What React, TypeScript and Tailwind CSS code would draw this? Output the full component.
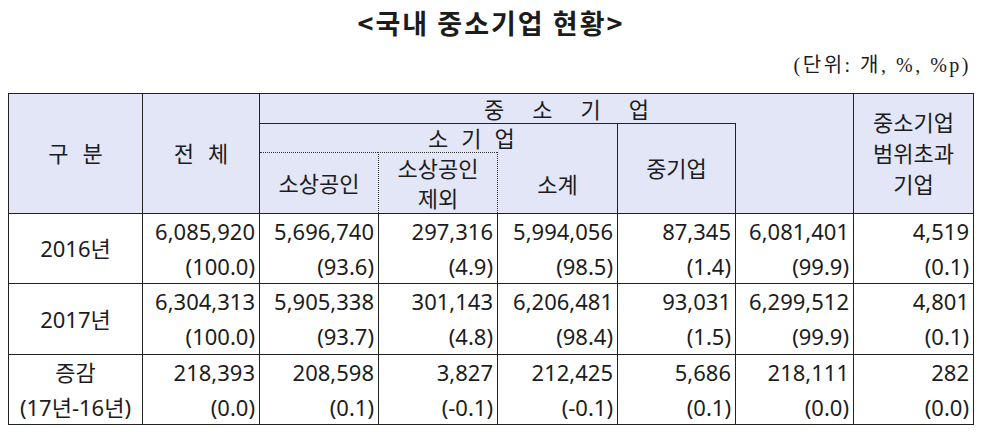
import React from 'react';

const rows = [
  {
    label: ['2016년'],
    h: 'h-[70px]',
    cells: [
      ['6,085,920', '(100.0)'],
      ['5,696,740', '(93.6)'],
      ['297,316', '(4.9)'],
      ['5,994,056', '(98.5)'],
      ['87,345', '(1.4)'],
      ['6,081,401', '(99.9)'],
      ['4,519', '(0.1)'],
    ],
  },
  {
    label: ['2017년'],
    h: 'h-[71px]',
    cells: [
      ['6,304,313', '(100.0)'],
      ['5,905,338', '(93.7)'],
      ['301,143', '(4.8)'],
      ['6,206,481', '(98.4)'],
      ['93,031', '(1.5)'],
      ['6,299,512', '(99.9)'],
      ['4,801', '(0.1)'],
    ],
  },
  {
    label: ['증감', '(17년-16년)'],
    h: 'h-[70px]',
    cells: [
      ['218,393', '(0.0)'],
      ['208,598', '(0.1)'],
      ['3,827', '(-0.1)'],
      ['212,425', '(-0.1)'],
      ['5,686', '(0.1)'],
      ['218,111', '(0.0)'],
      ['282', '(0.0)'],
    ],
  },
];

// body column widths after the label column
const widths = ['w-[117px]', 'w-[119px]', 'w-[119px]', 'w-[120px]', 'w-[118px]', 'w-[118px]', 'w-[120px]'];

const head = 'bg-[#e2e6f7] flex items-center justify-center text-center';

export default function App() {
  return (
    <div className="w-[982px] h-[435px] bg-white text-[#1c1c1c] font-['Noto_Sans','Noto_Sans_CJK_KR',sans-serif] overflow-hidden">
      <h1 className="pt-[6px] text-center text-[27px] leading-[34px] font-bold tracking-[2px] font-['Noto_Sans_CJK_KR',sans-serif]">
        &lt;국내 중소기업 현황&gt;
      </h1>
      <div className="mt-[13px] pr-[11px] text-right text-[20px] leading-[24px] tracking-[2.5px] font-['Liberation_Serif','Noto_Sans_CJK_KR',serif]">
        (단위: 개, %, %p)
      </div>

      <div className="mt-[16px] ml-[8px] w-[966px] border-r border-b border-[#222] text-[22px]">
        {/* header */}
        <div className="flex h-[120px]">
          <div className={`${head} w-[134px] border-l border-t border-[#222] gap-[14px]`}>
            <span>구</span>
            <span>분</span>
          </div>
          <div className={`${head} w-[117px] border-l border-t border-[#222] gap-[14px]`}>
            <span>전</span>
            <span>체</span>
          </div>
          <div className="w-[594px] border-l border-t border-[#222] bg-[#e2e6f7] flex flex-col">
            <div className="h-[29px] flex items-center justify-center gap-[28px] pl-[20px] leading-none">
              <span>중</span>
              <span>소</span>
              <span>기</span>
              <span>업</span>
            </div>
            <div className="flex h-[90px]">
              <div className="w-[357px] border-t border-[#222] flex flex-col">
                <div className="h-[28px] flex items-center gap-[13px] pl-[168px] leading-none">
                  <span>소</span>
                  <span>기</span>
                  <span>업</span>
                </div>
                <div className="flex h-[61px] leading-[30px]">
                  <div className={`${head} w-[118px] border-t border-dotted border-[#333]`}>소상공인</div>
                  <div className={`${head} w-[119px] border-t border-l border-dotted border-[#333] flex-col`}>
                    <span>소상공인</span>
                    <span>제외</span>
                  </div>
                  <div className={`${head} w-[120px] border-l border-dotted border-[#333] pt-[2px]`}>소계</div>
                </div>
              </div>
              <div className={`${head} w-[118px] border-l border-t border-[#222]`}>중기업</div>
              <div className="w-[118px] border-l border-[#222]" />
            </div>
          </div>
          <div className={`${head} w-[120px] border-l border-t border-[#222] flex-col leading-[31px]`}>
            <span>중소기업</span>
            <span>범위초과</span>
            <span>기업</span>
          </div>
        </div>

        {/* body */}
        {rows.map((r, i) => (
          <div key={i} className={`flex ${r.h}`}>
            <div className="w-[134px] border-l border-t border-[#222] flex flex-col items-center justify-center leading-[35px]">
              {r.label.map((t) => (
                <span key={t}>{t}</span>
              ))}
            </div>
            {r.cells.map((c, j) => (
              <div
                key={j}
                className={`${widths[j]} border-l border-t border-[#222] flex flex-col items-end justify-center pr-[4px] leading-[35px]`}
              >
                <span>{c[0]}</span>
                <span>{c[1]}</span>
              </div>
            ))}
          </div>
        ))}
      </div>
    </div>
  );
}
